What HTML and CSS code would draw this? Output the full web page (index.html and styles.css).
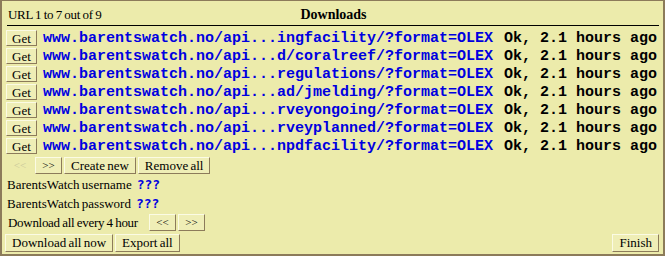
FILE: index.html
```html
<!DOCTYPE html>
<html lang="en">
<head>
  <meta charset="UTF-8" />
  <title>Downloads</title>
  <link rel="stylesheet" href="styles.css">
</head>
<body>
  <div class="panel">
    <div class="header">
      <span class="count">URL 1 to 7 out of 9</span>
      <span class="title">Downloads</span>
      <span></span>
    </div>
    <div class="list">
      <div class="row"><button class="btn">Get</button><span class="url">www.barentswatch.no/api...ingfacility/?format=OLEX</span><span class="status">Ok, 2.1 hours ago</span></div>
      <div class="row"><button class="btn">Get</button><span class="url">www.barentswatch.no/api...d/coralreef/?format=OLEX</span><span class="status">Ok, 2.1 hours ago</span></div>
      <div class="row"><button class="btn">Get</button><span class="url">www.barentswatch.no/api...regulations/?format=OLEX</span><span class="status">Ok, 2.1 hours ago</span></div>
      <div class="row"><button class="btn">Get</button><span class="url">www.barentswatch.no/api...ad/jmelding/?format=OLEX</span><span class="status">Ok, 2.1 hours ago</span></div>
      <div class="row"><button class="btn">Get</button><span class="url">www.barentswatch.no/api...rveyongoing/?format=OLEX</span><span class="status">Ok, 2.1 hours ago</span></div>
      <div class="row"><button class="btn">Get</button><span class="url">www.barentswatch.no/api...rveyplanned/?format=OLEX</span><span class="status">Ok, 2.1 hours ago</span></div>
      <div class="row"><button class="btn">Get</button><span class="url">www.barentswatch.no/api...npdfacility/?format=OLEX</span><span class="status">Ok, 2.1 hours ago</span></div>
    </div>
    <div class="nav">
      <button class="btn disabled">&lt;&lt;</button>
      <button class="btn arrow">&gt;&gt;</button>
      <button class="btn">Create new</button>
      <button class="btn">Remove all</button>
    </div>
    <div class="field">BarentsWatch username <span class="value">???</span></div>
    <div class="field">BarentsWatch password <span class="value">???</span></div>
    <div class="interval">
      <span class="label">Download all every 4 hour</span>
      <button class="btn arrow">&lt;&lt;</button>
      <button class="btn arrow">&gt;&gt;</button>
    </div>
    <div class="footer">
      <button class="btn">Download all now</button>
      <button class="btn">Export all</button>
      <span class="spacer"></span>
      <button class="btn finish">Finish</button>
    </div>
  </div>
</body>
</html>
```

FILE: styles.css
```css
* {
  box-sizing: border-box;
  margin: 0;
  padding: 0;
}
body {
  width: 665px;
  height: 256px;
  font-family: "Liberation Serif", serif;
  font-size: 13px;
  word-spacing: -1px;
  color: #000;
  background-color: #ecebab;
}
.panel {
  display: flex;
  flex-direction: column;
  width: 665px;
  height: 256px;
  padding: 0 4px;
  background-color: #ecebab;
  border: 2px solid #8c7b5a;
  border-top-width: 1px;
}
.header {
  display: grid;
  grid-template-columns: 1fr auto 1fr;
  align-items: center;
  height: 25px;
  margin: 0 0 3px 1px;
  padding: 3px 0 0 1px;
  border-bottom: 1px solid #000;
}
.count {
  letter-spacing: -0.3px;
  word-spacing: -0.5px;
}
.title {
  font-weight: bold;
  font-size: 14px;
  word-spacing: 0;
}
.list {
  display: flex;
  flex-direction: column;
}
.row {
  display: flex;
  align-items: center;
  height: 18px;
  white-space: pre;
}
.url,
.status {
  font-family: "Liberation Mono", "Courier New", monospace;
  font-weight: bold;
  font-size: 15px;
  word-spacing: 0;
}
.url {
  color: #0000e0;
  margin-left: 6px;
}
.status {
  margin-left: 11px;
}
.btn {
  height: 17px;
  padding: 0 6px;
  font-family: "Liberation Serif", serif;
  font-size: 13px;
  line-height: 15px;
  word-spacing: -1px;
  color: #000;
  background-color: #efeeb6;
  border: 1px solid;
  border-color: #fbfbe4 #8c7b5a #8c7b5a #fbfbe4;
}
.row .btn {
  width: 31px;
  height: 16px;
  padding: 0;
}
.arrow {
  width: 27px;
  padding: 0;
  font-size: 11px;
}
.disabled {
  width: 26px;
  padding: 0;
  font-size: 11px;
  color: #c9c79a;
  background: none;
  border-color: transparent;
  margin-left: 1px;
}
.nav {
  display: flex;
  align-items: center;
  gap: 2px;
  height: 19px;
  margin-top: 1px;
}
.field {
  display: flex;
  align-items: center;
  gap: 5px;
  height: 19px;
  margin-left: 1px;
}
.value {
  color: #0000e0;
  font-family: "DejaVu Sans Mono", monospace;
  font-weight: bold;
  font-size: 13px;
}
.interval {
  display: flex;
  align-items: center;
  gap: 2px;
  height: 19px;
}
.interval .label {
  flex-shrink: 0;
  width: 141px;
  padding-left: 2px;
  white-space: nowrap;
  letter-spacing: -0.3px;
  word-spacing: -0.5px;
}
.footer {
  display: flex;
  align-items: center;
  gap: 2px;
  height: 21px;
  margin-left: -1px;
}
.footer .btn {
  height: 18px;
}
.spacer {
  flex: 1;
}
.footer .finish {
  padding: 0 6px;
}
```
